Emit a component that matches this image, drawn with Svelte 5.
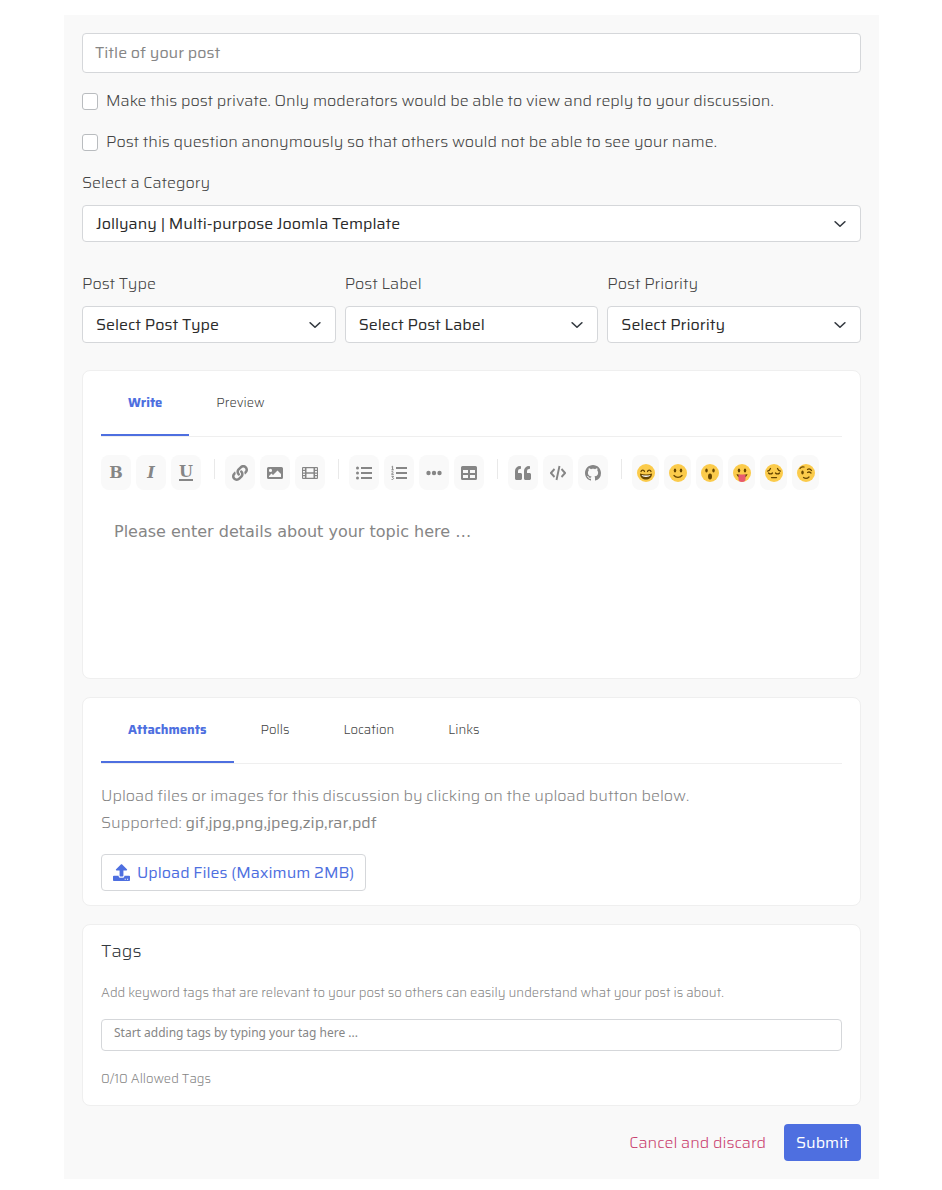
<script>
  let title = $state('');
  let isPrivate = $state(false);
  let isAnonymous = $state(false);
  let category = $state('jollyany');
  let details = $state('');
  let tags = $state('');
  let editorTab = $state('Write');
  let extraTab = $state('Attachments');

  const editorTabs = ['Write', 'Preview'];
  const extraTabs = ['Attachments', 'Polls', 'Location', 'Links'];

  const selects = [
    { id: 'post-type', label: 'Post Type', placeholder: 'Select Post Type' },
    { id: 'post-label', label: 'Post Label', placeholder: 'Select Post Label' },
    { id: 'post-priority', label: 'Post Priority', placeholder: 'Select Priority' }
  ];

  const toolGroups = [
    ['bold', 'italic', 'underline'],
    ['link', 'image', 'video'],
    ['bullets', 'numbers', 'more', 'table'],
    ['quote', 'code', 'github']
  ];

  const emojis = ['grin', 'smile', 'surprised', 'tongue', 'sad', 'wink'];
</script>

{#snippet chevron()}
  <svg class="chevron" viewBox="0 0 16 16" width="12" height="12" aria-hidden="true">
    <path d="M1.500 5l6.500 6 6.500-6" fill="none" stroke="#343a40" stroke-width="2.2" stroke-linecap="round" stroke-linejoin="round" />
  </svg>
{/snippet}

{#snippet toolIcon(name)}
  {#if name === 'bold'}
    <b class="letter">B</b>
  {:else if name === 'italic'}
    <i class="letter">I</i>
  {:else if name === 'underline'}
    <span class="letter under">U</span>
  {:else}
    <svg viewBox="0 0 16 16" width="16" height="16" fill="currentColor" aria-hidden="true">
      {#if name === 'link'}
        <g transform="scale(0.03125)">
          <path d="M326.612 185.391c59.747 59.809 58.927 155.698.36 214.59-.11.12-.24.25-.36.37l-67.2 67.2c-59.27 59.27-155.699 59.262-214.96 0-59.27-59.26-59.27-155.7 0-214.96l37.106-37.106c9.84-9.84 26.786-3.3 27.294 10.606.648 17.722 3.826 35.527 9.69 52.721 1.986 5.822.567 12.262-3.783 16.612l-13.087 13.087c-28.026 28.026-28.905 73.66-1.155 101.96 28.024 28.579 74.086 28.749 102.325.51l67.2-67.19c28.191-28.191 28.073-73.757 0-101.83-3.701-3.694-7.429-6.564-10.341-8.569a16.037 16.037 0 0 1-6.947-12.606c-.396-10.567 3.348-21.456 11.698-29.806l21.054-21.055c5.521-5.521 14.182-6.199 20.584-1.731a152.482 152.482 0 0 1 20.522 17.197zM467.547 44.449c-59.261-59.262-155.69-59.27-214.96 0l-67.2 67.2c-.12.12-.25.25-.36.37-58.566 58.892-59.387 154.781.36 214.59a152.454 152.454 0 0 0 20.521 17.196c6.402 4.468 15.064 3.789 20.584-1.731l21.054-21.055c8.35-8.35 12.094-19.239 11.698-29.806a16.037 16.037 0 0 0-6.947-12.606c-2.912-2.005-6.64-4.875-10.341-8.569-28.073-28.073-28.191-73.639 0-101.83l67.2-67.19c28.239-28.239 74.3-28.069 102.325.51 27.75 28.3 26.872 73.934-1.155 101.96l-13.087 13.087c-4.35 4.35-5.769 10.79-3.783 16.612 5.864 17.194 9.042 34.999 9.69 52.721.509 13.906 17.454 20.446 27.294 10.606l37.106-37.106c59.271-59.259 59.271-155.699.001-214.959z" />
        </g>
      {:else if name === 'image'}
        <path fill-rule="evenodd" d="M1.5 2h13A1.5 1.5 0 0 1 16 3.5v9a1.5 1.5 0 0 1-1.5 1.5h-13A1.5 1.5 0 0 1 0 12.5v-9A1.5 1.5 0 0 1 1.5 2zM2 12h12V9l-3.5-3.5L6 10 4.500 8.500 2 11zM3.500 3.800a1.600 1.600 0 1 0 0 3.200 1.600 1.600 0 0 0 0-3.200z" />
      {:else if name === 'video'}
        <path fill-rule="evenodd" d="M1 2h14a1 1 0 0 1 1 1v10a1 1 0 0 1-1 1H1a1 1 0 0 1-1-1V3a1 1 0 0 1 1-1zM4.500 3.300v4h7v-4zM4.500 8.700v4h7v-4zM1 3.300v1.400h2V3.300zM1 6v1.400h2V6zM1 8.700v1.400h2V8.700zM1 11.300v1.400h2v-1.400zM13 3.300v1.400h2V3.300zM13 6v1.400h2V6zM13 8.700v1.400h2V8.700zM13 11.300v1.400h2v-1.400z" />
      {:else if name === 'bullets'}
        <circle cx="1.5" cy="3" r="1.5" />
        <circle cx="1.5" cy="8" r="1.5" />
        <circle cx="1.5" cy="13" r="1.5" />
        <path d="M5 2h11v2H5zM5 7h11v2H5zM5 12h11v2H5z" />
      {:else if name === 'numbers'}
        <path d="M5 2h11v2H5zM5 7h11v2H5zM5 12h11v2H5z" />
        <path d="M.6 1.8l1-.6v3.6M.4 4.8h2.4M.5 6.7c1-.8 2 0 1.4.9L.5 9.3h2.3M.5 11.3h2l-1 1.3c1.6 0 1.4 2.2-.9 1.9" fill="none" stroke="currentColor" stroke-width="1" />
      {:else if name === 'more'}
        <circle cx="2.5" cy="8" r="2.2" />
        <circle cx="8" cy="8" r="2.2" />
        <circle cx="13.5" cy="8" r="2.2" />
      {:else if name === 'table'}
        <path fill-rule="evenodd" d="M1.5 1h13A1.5 1.5 0 0 1 16 2.5v11a1.5 1.5 0 0 1-1.5 1.5h-13A1.5 1.5 0 0 1 0 13.5v-11A1.5 1.5 0 0 1 1.5 1zM2 5v3h5V5zM9 5v3h5V5zM2 10v3h5v-3zM9 10v3h5v-3z" />
      {:else if name === 'quote'}
        <path d="M5.5 8H3V6a2 2 0 0 1 2-2h.3c.4 0 .7-.3.7-.7V1.700c0-.4-.3-.7-.7-.7H5a5 5 0 0 0-5 5v7.500C0 14.300.7 15 1.500 15h4c.8 0 1.500-.7 1.500-1.500v-4C7 8.700 6.300 8 5.500 8zM14.500 8H12V6a2 2 0 0 1 2-2h.3c.4 0 .7-.3.7-.7V1.700c0-.4-.3-.7-.7-.7H14a5 5 0 0 0-5 5v7.500c0 .8.7 1.500 1.500 1.500h4c.8 0 1.500-.7 1.500-1.500v-4c0-.8-.7-1.500-1.500-1.500z" />
      {:else if name === 'code'}
        <path d="M4 4L0 8l4 4M12 4l4 4-4 4M9.700 1L6.300 15" transform="translate(1 0) scale(.875 1)" fill="none" stroke="currentColor" stroke-width="2.2" />
      {:else if name === 'github'}
        <path d="M8 0C3.580 0 0 3.580 0 8c0 3.540 2.290 6.530 5.470 7.590.4.070.55-.17.55-.38 0-.19-.01-.82-.01-1.490-2.010.37-2.530-.49-2.690-.94-.09-.23-.48-.94-.82-1.130-.28-.15-.68-.52-.01-.53.63-.01 1.080.58 1.230.82.72 1.210 1.870.87 2.330.66.07-.52.28-.87.51-1.070-1.780-.2-3.640-.89-3.640-3.950 0-.87.31-1.590.82-2.150-.08-.2-.36-1.020.08-2.120 0 0 .67-.21 2.200.82.64-.18 1.320-.27 2-.27.68 0 1.360.09 2 .27 1.530-1.040 2.200-.82 2.200-.82.44 1.100.16 1.920.08 2.120.51.56.82 1.270.82 2.150 0 3.070-1.870 3.750-3.650 3.950.29.25.54.73.54 1.480 0 1.070-.01 1.930-.01 2.200 0 .21.15.46.55.38A8.013 8.013 0 0 0 16 8c0-4.420-3.580-8-8-8z" />
      {/if}
    </svg>
  {/if}
{/snippet}

{#snippet face(name)}
  <svg viewBox="0 0 36 36" width="18" height="18" aria-hidden="true">
    <circle cx="18" cy="18" r="18" fill="#fbcb4b" />
    {#if name === 'grin'}
      <path d="M8 15c1-4 6-4 7 0M21 15c1-4 6-4 7 0" fill="none" stroke="#664500" stroke-width="2.5" stroke-linecap="round" />
      <path d="M6 19c8 2.500 16 2.500 24 0 0 16-24 16-24 0z" fill="#664500" />
      <path d="M9 22c6 1.500 12 1.500 18 0-1 5-17 5-18 0z" fill="#fff" />
    {:else if name === 'smile'}
      <ellipse cx="12" cy="13" rx="2.5" ry="4" fill="#664500" />
      <ellipse cx="24" cy="13" rx="2.5" ry="4" fill="#664500" />
      <path d="M10 23c4 5 12 5 16 0" fill="none" stroke="#664500" stroke-width="2.5" stroke-linecap="round" />
    {:else if name === 'surprised'}
      <ellipse cx="11" cy="13" rx="2.5" ry="4" fill="#664500" />
      <ellipse cx="25" cy="13" rx="2.5" ry="4" fill="#664500" />
      <ellipse cx="18" cy="25" rx="4" ry="6" fill="#664500" />
    {:else if name === 'tongue'}
      <ellipse cx="12" cy="13" rx="2.5" ry="4" fill="#664500" />
      <ellipse cx="24" cy="13" rx="2.5" ry="4" fill="#664500" />
      <path d="M7 20c7 3 15 3 22 0-1 5-5 8-11 8S8 25 7 20z" fill="#664500" />
      <path d="M11 21h14v9a7 6 0 0 1-14 0z" fill="#e8596e" />
    {:else if name === 'sad'}
      <path d="M5 14c3 0 5-2 6-5M31 14c-3 0-5-2-6-5M7 18c2 2.500 6 2.500 8 0M21 18c2 2.500 6 2.500 8 0M13 27h10" fill="none" stroke="#664500" stroke-width="2.5" stroke-linecap="round" />
    {:else}
      <ellipse cx="11" cy="17" rx="2.5" ry="4" fill="#664500" />
      <path d="M6 9c2-3 5-4 8-3M21 11c3-2 6-1 8 2M21 17c3-2 5-1 7 1M13 27c4 3 8 2 11-1" fill="none" stroke="#664500" stroke-width="2.5" stroke-linecap="round" />
    {/if}
  </svg>
{/snippet}

<form class="composer" onsubmit={(e) => e.preventDefault()}>
  <input class="title" type="text" placeholder="Title of your post" aria-label="Title of your post" bind:value={title} />

  <label class="check">
    <input type="checkbox" bind:checked={isPrivate} />
    <span>Make this post private. Only moderators would be able to view and reply to your discussion.</span>
  </label>
  <label class="check">
    <input type="checkbox" bind:checked={isAnonymous} />
    <span>Post this question anonymously so that others would not be able to see your name.</span>
  </label>

  <div class="field category">
    <label for="category">Select a Category</label>
    <div class="select">
      <select id="category" bind:value={category}>
        <option value="jollyany">Jollyany | Multi-purpose Joomla Template</option>
      </select>
      {@render chevron()}
    </div>
  </div>

  <div class="columns">
    {#each selects as item}
      <div class="field">
        <label for={item.id}>{item.label}</label>
        <div class="select">
          <select id={item.id}>
            <option value="">{item.placeholder}</option>
          </select>
          {@render chevron()}
        </div>
      </div>
    {/each}
  </div>

  <section class="card">
    <div class="tabs" role="tablist">
      {#each editorTabs as tab}
        <button type="button" role="tab" class:active={editorTab === tab} aria-selected={editorTab === tab} onclick={() => (editorTab = tab)}>{tab}</button>
      {/each}
    </div>
    <div class="toolbar">
      {#each toolGroups as group}
        <div class="group">
          {#each group as name}
            <button type="button" class="tool" aria-label={name}>{@render toolIcon(name)}</button>
          {/each}
        </div>
        <span class="divider"></span>
      {/each}
      <div class="group">
        {#each emojis as name}
          <button type="button" class="tool emoji" aria-label={name}>{@render face(name)}</button>
        {/each}
      </div>
    </div>
    <textarea class="details" rows="5" placeholder="Please enter details about your topic here …" aria-label="Details" bind:value={details}></textarea>
  </section>

  <section class="card">
    <div class="tabs" role="tablist">
      {#each extraTabs as tab}
        <button type="button" role="tab" class:active={extraTab === tab} aria-selected={extraTab === tab} onclick={() => (extraTab = tab)}>{tab}</button>
      {/each}
    </div>
    <p class="info">
      Upload files or images for this discussion by clicking on the upload button below.<br />
      Supported: <strong>gif,jpg,png,jpeg,zip,rar,pdf</strong>
    </p>
    <button type="button" class="upload">
      <svg viewBox="0 0 16 16" width="17" height="17" fill="currentColor" aria-hidden="true">
        <path d="M6.200 11V6H3.300c-.6 0-.8-.6-.4-1L7.600.3c.2-.2.6-.2.8 0L13.100 5c.4.4.2 1-.4 1H9.800v5c0 .5-.3.8-.8.8H7c-.5 0-.8-.3-.8-.8z" />
        <path fill-rule="evenodd" d="M.8 11h4.400c0 1.200.8 1.900 1.800 1.900h2c1 0 1.800-.7 1.800-1.900h4.400c.5 0 .8.3.8.8v3.500c0 .4-.3.7-.8.7H.8c-.5 0-.8-.3-.8-.7v-3.500c0-.5.3-.8.8-.8zM11 13.800v1h1v-1zM13.200 13.800v1h1v-1z" />
      </svg>
      Upload Files (Maximum 2MB)
    </button>
  </section>

  <section class="card">
    <h2>Tags</h2>
    <p class="hint">Add keyword tags that are relevant to your post so others can easily understand what your post is about.</p>
    <input class="tags" type="text" placeholder="Start adding tags by typing your tag here ..." aria-label="Tags" bind:value={tags} />
    <p class="hint">0/10 Allowed Tags</p>
  </section>

  <div class="actions">
    <a href="#discard">Cancel and discard</a>
    <button type="submit" class="submit">Submit</button>
  </div>
</form>

<style>
  :global(body) {
    background: #fff;
  }

  .composer {
    display: flex;
    flex-direction: column;
    margin: 15px 63px 12px 64px;
    padding: 18px;
    background: #f9f9f9;
    color: #444;
    font-family: Saira, "Open Sans", sans-serif;
    font-size: 16px;
    font-weight: 300;
    line-height: 24px;
  }

  .composer * {
    box-sizing: border-box;
  }

  input,
  select,
  textarea,
  button {
    font: inherit;
  }

  .title {
    width: 100%;
    height: 40px;
    margin-bottom: 16px;
    padding: 0 12px 2px;
    border: 1px solid #d5d7da;
    border-radius: 4px;
    background: #fff;
    font-weight: 400;
  }

  .title::placeholder,
  .details::placeholder,
  .tags::placeholder {
    color: #868686;
    opacity: 1;
  }

  .check {
    display: flex;
    align-items: center;
    gap: 8px;
    margin-bottom: 17px;
  }

  .check input {
    appearance: none;
    flex: none;
    width: 16px;
    height: 17px;
    margin: 0;
    border: 1px solid #b9bcbf;
    border-radius: 3px;
    background: #fff;
  }

  .check input:checked {
    background: #4e6fe0;
  }

  .field {
    display: flex;
    flex-direction: column;
    gap: 10px;
  }

  .category {
    margin-bottom: 30px;
  }

  .columns {
    display: grid;
    grid-template-columns: repeat(3, 1fr);
    gap: 9px;
    margin-bottom: 27px;
  }

  .select {
    display: grid;
    align-items: center;
  }

  .select select,
  .chevron {
    grid-area: 1 / 1;
  }

  .select select {
    appearance: none;
    width: 100%;
    height: 37px;
    padding: 1px 36px 0 13px;
    border: 1px solid #d5d7da;
    border-radius: 4px;
    background: #fff;
    color: #2b2b2b;
    font-weight: 400;
  }

  .chevron {
    justify-self: end;
    margin-right: 15px;
    pointer-events: none;
  }

  .card {
    margin-bottom: 18px;
    padding: 0 18px 14px;
    border: 1px solid #efefef;
    border-radius: 8px;
    background: #fff;
  }

  .tabs {
    display: flex;
    height: 66px;
    border-bottom: 1px solid #efefef;
  }

  .tabs button {
    padding: 0 27px;
    border: 0;
    border-bottom: 2px solid transparent;
    background: none;
    color: #444;
    font-size: 13px;
  }

  .tabs .active {
    border-color: #4e6fe0;
    color: #4e6fe0;
    font-weight: 700;
  }

  .toolbar {
    display: flex;
    flex-wrap: wrap;
    margin-top: 18px;
  }

  .group {
    display: flex;
    gap: 5px;
  }

  .divider {
    width: 1px;
    height: 20px;
    margin: 4px 10px 0 13px;
    background: #e9e9e9;
  }

  .tool {
    display: flex;
    align-items: center;
    justify-content: center;
    width: 30px;
    height: 35px;
    padding: 0;
    border: 0;
    border-radius: 8px;
    background: #f9f9f9;
    color: #868686;
  }

  .emoji {
    width: 27px;
  }

  .letter {
    font-family: "DejaVu Serif", serif;
    font-size: 16px;
    font-weight: 700;
    line-height: 16px;
  }

  .under {
    line-height: 14px;
    border-bottom: 2px solid;
  }

  .details {
    display: block;
    width: 100%;
    margin-top: 18px;
    padding: 12px 13px 24px;
    border: 0;
    resize: none;
    font-family: "DejaVu Sans", sans-serif;
    font-size: 16px;
    font-weight: 400;
  }

  p {
    margin: 0;
  }

  .info {
    margin: 18px 0;
    color: #868686;
    line-height: 27px;
  }

  .info strong {
    font-weight: 400;
  }

  .upload {
    display: flex;
    align-items: center;
    gap: 7px;
    height: 37px;
    padding: 0 11px;
    border: 1px solid #d5d7da;
    border-radius: 4px;
    background: #fff;
    color: #4e6fe0;
    font-weight: 400;
  }

  h2 {
    margin: 14px 0 18px;
    color: #343a40;
    font-size: 18px;
    font-weight: 300;
    line-height: 24px;
  }

  .hint {
    color: #868686;
    font-size: 13px;
  }

  .tags {
    width: 100%;
    height: 32px;
    margin: 14px 0 16px;
    padding: 0 12px 5px;
    border: 1px solid #d5d7da;
    border-radius: 4px;
    font-family: "Noto Sans", sans-serif;
    font-size: 12px;
    font-weight: 400;
  }

  .actions {
    display: flex;
    align-items: center;
    justify-content: flex-end;
    gap: 18px;
  }

  .actions a {
    color: #c94270;
    text-decoration: none;
  }

  .submit {
    height: 37px;
    padding: 0 12px;
    border: 0;
    border-radius: 4px;
    background: #4e6fe0;
    color: #fff;
    font-weight: 400;
  }
</style>
